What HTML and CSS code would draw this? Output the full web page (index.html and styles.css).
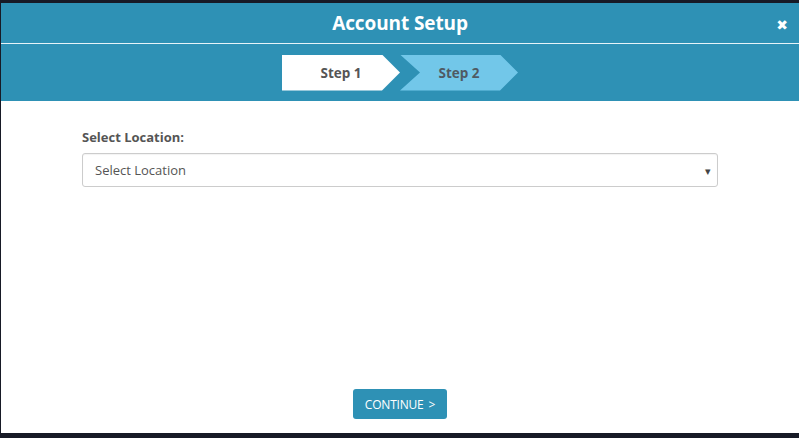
FILE: index.html
```html
<!DOCTYPE html>
<html>
<head>
<meta charset="utf-8">
<link rel="stylesheet" href="styles.css">
</head>
<body>
<div class="modal">
  <div class="header">
    <h1 class="title">Account Setup</h1>
    <span class="close">&#x2716;</span>
  </div>
  <div class="steps">
    <div class="step step-active">Step 1</div>
    <div class="step step-next">Step 2</div>
  </div>
  <div class="content">
    <div class="field">
      <label class="label">Select Location:</label>
      <div class="select">
        <span>Select Location</span>
        <span class="caret">&#9662;</span>
      </div>
    </div>
    <div class="actions">
      <button class="btn">CONTINUE &gt;</button>
    </div>
  </div>
</div>
</body>
</html>
```
FILE: styles.css
```css
html, body {
  margin: 0;
  padding: 0;
  background: #171a26;
  height: 438px;
  overflow: hidden;
}
body {
  font-family: "Open Sans", "Noto Sans", sans-serif;
  padding-top: 3px;
  padding-left: 1px;
}
.modal {
  height: 430px;
  display: flex;
  flex-direction: column;
  background: #fff;
}
.header {
  height: 40px;
  background: #2e91b5;
  border-bottom: 1px solid #e6f3f8;
  display: flex;
  align-items: center;
  justify-content: center;
  position: relative;
}
.title {
  margin: 0;
  color: #fff;
  font-size: 19px;
  font-weight: 700;
  letter-spacing: -0.1px;
}
.close {
  position: absolute;
  right: 11px;
  top: 14px;
  color: #fff;
  font-size: 14px;
  line-height: 16px;
  font-weight: 700;
  font-family: "DejaVu Sans", sans-serif;
}
.steps {
  height: 57px;
  background: #2e91b5;
  display: flex;
  align-items: center;
  justify-content: center;
}
.step {
  height: 36px;
  width: 118px;
  display: flex;
  align-items: center;
  justify-content: center;
  font-size: 13.5px;
  font-weight: 700;
  color: #555;
  box-sizing: border-box;
}
.step-active {
  background: #fff;
  clip-path: polygon(0 0, 100px 0, 118px 50%, 100px 100%, 0 100%);
}
.step-next {
  background: #72c7e9;
  color: #4f5a63;
  clip-path: polygon(0 0, 100px 0, 118px 50%, 100px 100%, 0 100%, 20px 50%);
}
.content {
  flex: 1;
  display: flex;
  flex-direction: column;
  padding: 27px 81px 14px 81px;
}
.field {
  flex: 1;
}
.label {
  display: block;
  font-size: 13px;
  font-weight: 700;
  color: #555;
  margin-bottom: 7px;
}
.select {
  height: 34px;
  border: 1px solid #ccc;
  border-radius: 3px;
  box-sizing: border-box;
  display: flex;
  align-items: center;
  justify-content: space-between;
  padding: 0 6px 0 12px;
  font-size: 13px;
  color: #555;
  box-shadow: inset 0 1px 1px rgba(0,0,0,0.05);
}
.caret {
  font-size: 11px;
  color: #444;
}
.actions {
  display: flex;
  justify-content: center;
}
.btn {
  height: 30px;
  padding: 0 12px;
  border: none;
  border-radius: 3px;
  background: #2e91b5;
  color: #fff;
  font-family: "Open Sans", "Noto Sans", sans-serif;
  font-size: 12px;
  letter-spacing: -0.2px;
  word-spacing: 2px;
}
```
